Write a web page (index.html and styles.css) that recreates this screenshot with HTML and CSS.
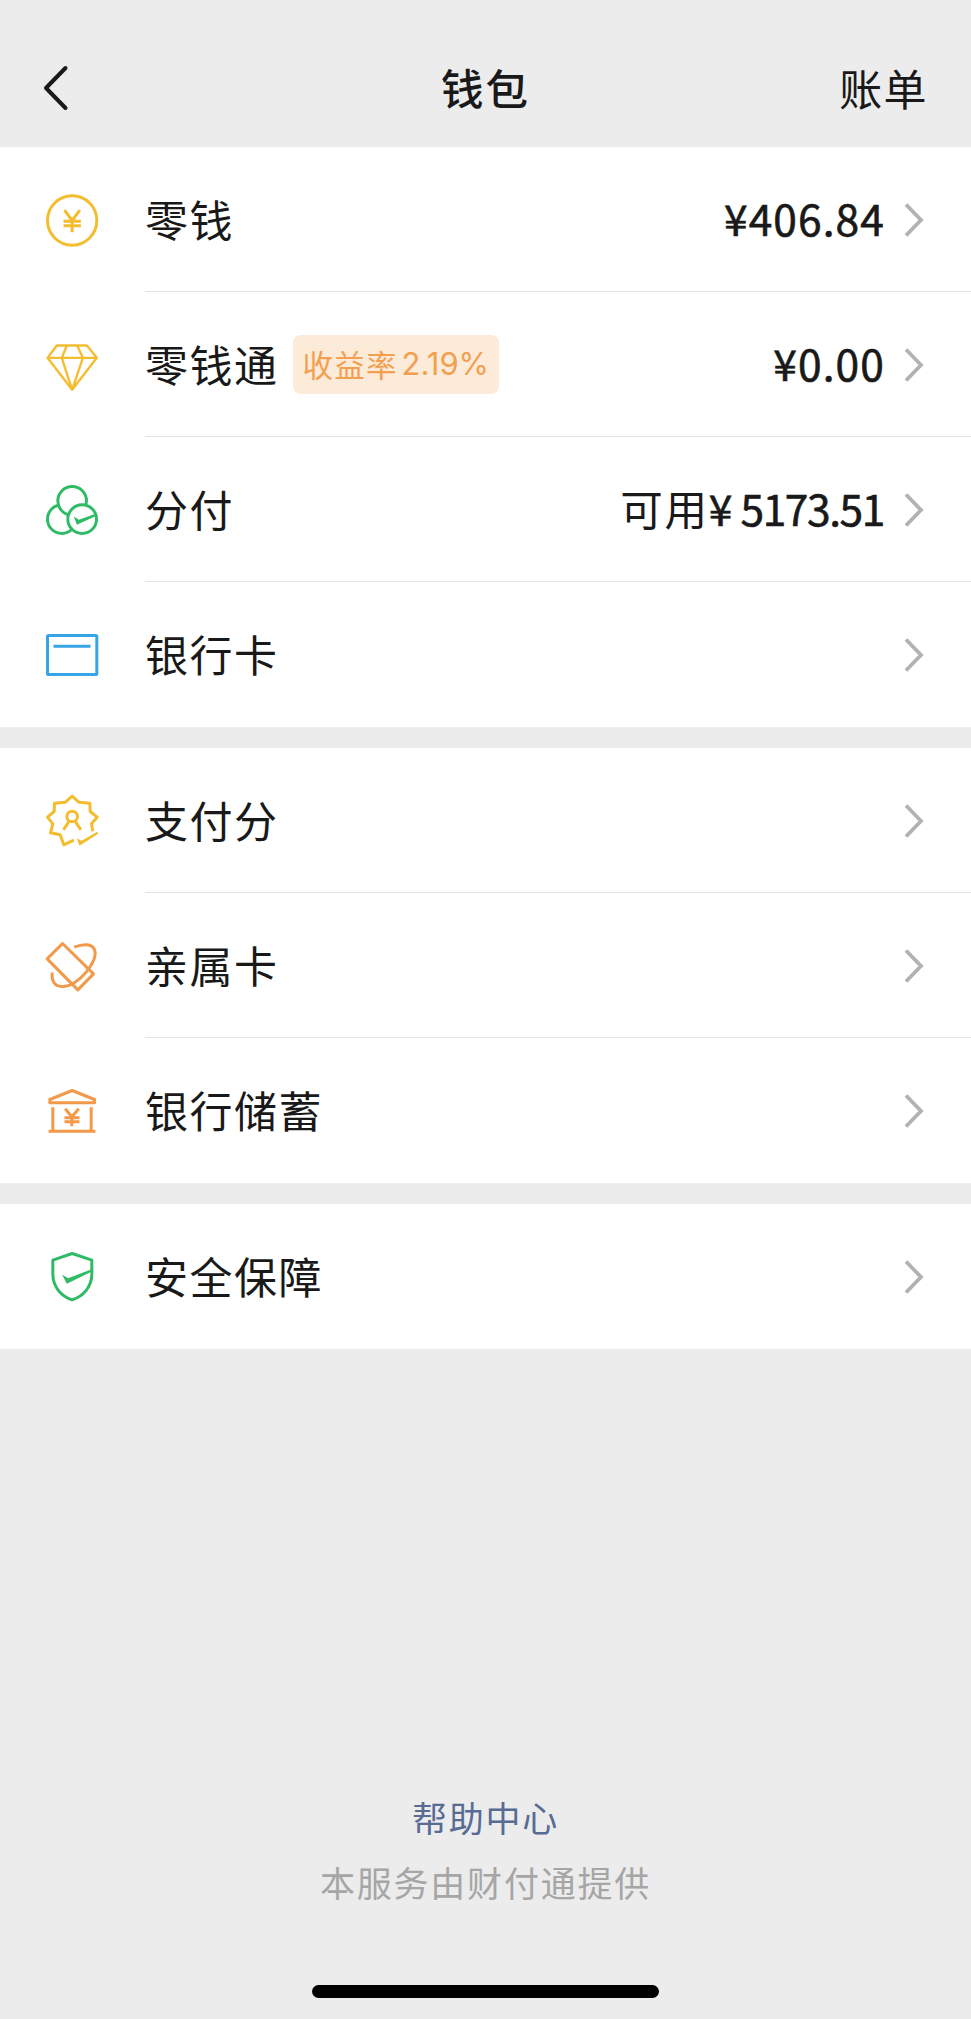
FILE: index.html
```html
<!DOCTYPE html>
<html lang="zh-CN">
<head>
<meta charset="utf-8">
<title>钱包</title>
<link rel="stylesheet" href="styles.css">
</head>
<body>
<svg class="defs" width="0" height="0">
  <symbol id="chevron" viewBox="0 0 20 36"><path d="M2 2.5 17 18 2 33.5" fill="none" stroke="#b2b2b2" stroke-width="3.8"/></symbol>
</svg>
<div class="page">
  <header class="header">
    <svg class="back" viewBox="0 0 26 46"><path d="M22.5 3 3 23 22.5 43" fill="none" stroke="#191919" stroke-width="4" stroke-linecap="round" stroke-linejoin="round"/></svg>
    <h1 class="title">钱包</h1>
    <span class="bill">账单</span>
  </header>

  <section class="group">
    <div class="row">
      <svg class="icon yellow" viewBox="127.5 448.5 180 180"><circle cx="218" cy="540" r="74"/><path d="M195 509 218 540 241 509M218 538V575M192 542H244M192 556H244"/></svg>
      <div class="cell"><span class="label">零钱</span><span class="amount">¥406.84</span><svg class="chevron"><use href="#chevron"/></svg></div>
    </div>
    <div class="row">
      <svg class="icon yellow" viewBox="37.5 43.5 180 180"><path d="M82 75H172L202 112 128 208 54 112ZM54 112H202M112 75 97 112 128 208 160 112 143 75" stroke-width="7"/></svg>
      <div class="cell"><span class="label">零钱通</span><span class="badge">收益率<span class="rate">2.19%</span></span><span class="amount">¥0.00</span><svg class="chevron"><use href="#chevron"/></svg></div>
    </div>
    <div class="row">
      <svg class="icon green" viewBox="37.5 478.5 180 180"><circle cx="97" cy="596" r="43"/><circle class="mask" cx="128" cy="541" r="43"/><circle class="mask" cx="158" cy="596" r="43"/><path class="solid" d="M133 588 148 598 201 579V586L142 613Z"/></svg>
      <div class="cell"><span class="label">分付</span><span class="amount"><span class="avail">可用</span>¥<span class="credit">5173.51</span></span><svg class="chevron"><use href="#chevron"/></svg></div>
    </div>
    <div class="row">
      <svg class="icon blue" viewBox="37.5 103.5 180 180"><rect x="54" y="135" width="148" height="117" rx="4"/><path d="M72 167H183"/></svg>
      <div class="cell"><span class="label">银行卡</span><svg class="chevron"><use href="#chevron"/></svg></div>
    </div>
  </section>

  <section class="group">
    <div class="row">
      <svg class="icon yellow" viewBox="37.5 31.5 180 180"><path d="M190 152 186 130 203 110 182 93 181 68 148 65 128 47 108 65 75 68 74 93 54 110 70 130 63 157 92 163 103 193 133 179"/><circle cx="128" cy="108" r="16"/><path d="M119 122 102 148M137 122 154 148"/><path class="solid" d="M142 173 156 181 203 154 206 160 150 196Z"/></svg>
      <div class="cell"><span class="label">支付分</span><svg class="chevron"><use href="#chevron"/></svg></div>
    </div>
    <div class="row">
      <svg class="icon orange" viewBox="37.5 46.5 180 180"><path d="M99 69 192 160 145 208 53 115Z"/><path d="M68 156C66 181 74 197 97 198 121 199 151 179 170 155 190 130 201 104 195 88 188 68 160 70 134 80"/></svg>
      <div class="cell"><span class="label">亲属卡</span><svg class="chevron"><use href="#chevron"/></svg></div>
    </div>
    <div class="row">
      <svg class="icon orange" viewBox="37.5 61.5 180 180"><path d="M61 127V117L128 90 195 117V127ZM70 140V211M185 140V211M57 212H198M107 145 127 169 148 145M127 168V197M105 172H150M105 184H150"/></svg>
      <div class="cell"><span class="label">银行储蓄</span><svg class="chevron"><use href="#chevron"/></svg></div>
    </div>
  </section>

  <section class="group">
    <div class="row">
      <svg class="icon green" viewBox="37.5 79.5 180 180"><path d="M128 99 187 119V160C187 199 162 227 128 238 94 227 70 199 70 160V119Z"/><path class="solid" d="M98 163 116 173 187 146V153L112 190Z"/></svg>
      <div class="cell"><span class="label">安全保障</span><svg class="chevron"><use href="#chevron"/></svg></div>
    </div>
  </section>

  <footer class="footer">
    <a class="help">帮助中心</a>
    <p class="provider">本服务由财付通提供</p>
    <div class="home-bar"></div>
  </footer>
</div>
</body>
</html>
```
FILE: styles.css
```css
* { box-sizing: border-box; }
body {
  margin: 0;
  background: #ececec;
  color: #191919;
  font-family: "Noto Sans CJK SC", sans-serif;
}
.defs { display: none; }
.page { display: flex; flex-direction: column; width: 971px; height: 2019px; }
.header {
  display: grid;
  grid-template-columns: 1fr auto 1fr;
  align-items: center;
  height: 147px;
  padding: 28px 43px 0 43px;
  line-height: 60px;
}
.back { width: 26px; height: 46px; }
.title { margin: 0; padding-bottom: 2px; font-size: 42.5px; font-weight: 500; letter-spacing: 2px; }
.bill { justify-self: end; padding-bottom: 2px; font-size: 43px; letter-spacing: 1.4px; }
.group { background: #fff; margin-bottom: 21px; }
.row { display: flex; align-items: center; height: 145px; padding-left: 42px; }
.icon { flex: none; width: 60px; height: 60px; margin-right: 43px; fill: none; stroke: currentColor; stroke-width: 9; stroke-linejoin: round; }
.yellow { color: #f3bd2f; }
.green { color: #2fbb65; }
.blue { color: #35a5e5; }
.orange { color: #f2994a; }
.icon .mask { fill: #fff; }
.icon .solid { fill: currentColor; stroke: none; }
.cell {
  flex: 1;
  display: flex;
  align-items: center;
  height: 145px;
  padding: 1px 47px 0 0;
  border-bottom: 1px solid #e4e4e4;
}
.row:last-child .cell { border-bottom-color: transparent; }
.label { padding-bottom: 3px; font-size: 43px; line-height: 60px; letter-spacing: 1.5px; }
.badge {
  display: flex;
  align-items: center;
  height: 59px;
  margin-left: 14px;
  padding: 0 10px 2px;
  border-radius: 8px;
  background: #fdebda;
  color: #f2a050;
  font-size: 30.5px;
  letter-spacing: 1.2px;
}
.rate { margin-left: 4px; font-family: Inter, sans-serif; font-size: 31px; letter-spacing: 0; }
.amount {
  margin-left: auto;
  padding-bottom: 4px;
  font-size: 42.5px;
  letter-spacing: 1.1px;
  line-height: 60px;
  -webkit-text-stroke: 0.6px currentColor;
}
.avail { font-size: 42.5px; letter-spacing: 1.8px; -webkit-text-stroke: 0; }
.credit { margin-left: 7px; margin-right: 1px; letter-spacing: -1.4px; }
.chevron { flex: none; width: 20px; height: 36px; margin-left: 19px; }
.label + .chevron { margin-left: auto; }
.footer { flex: 1; display: flex; flex-direction: column; align-items: center; justify-content: flex-end; padding-bottom: 21px; }
.help { color: #576b95; font-size: 35px; line-height: 50px; letter-spacing: 1.7px; }
.provider { margin: 15px 0 78px; color: #a6a6a6; font-size: 35px; line-height: 50px; letter-spacing: 1.8px; }
.home-bar { width: 347px; height: 13px; border-radius: 7px; background: #000; }
```
